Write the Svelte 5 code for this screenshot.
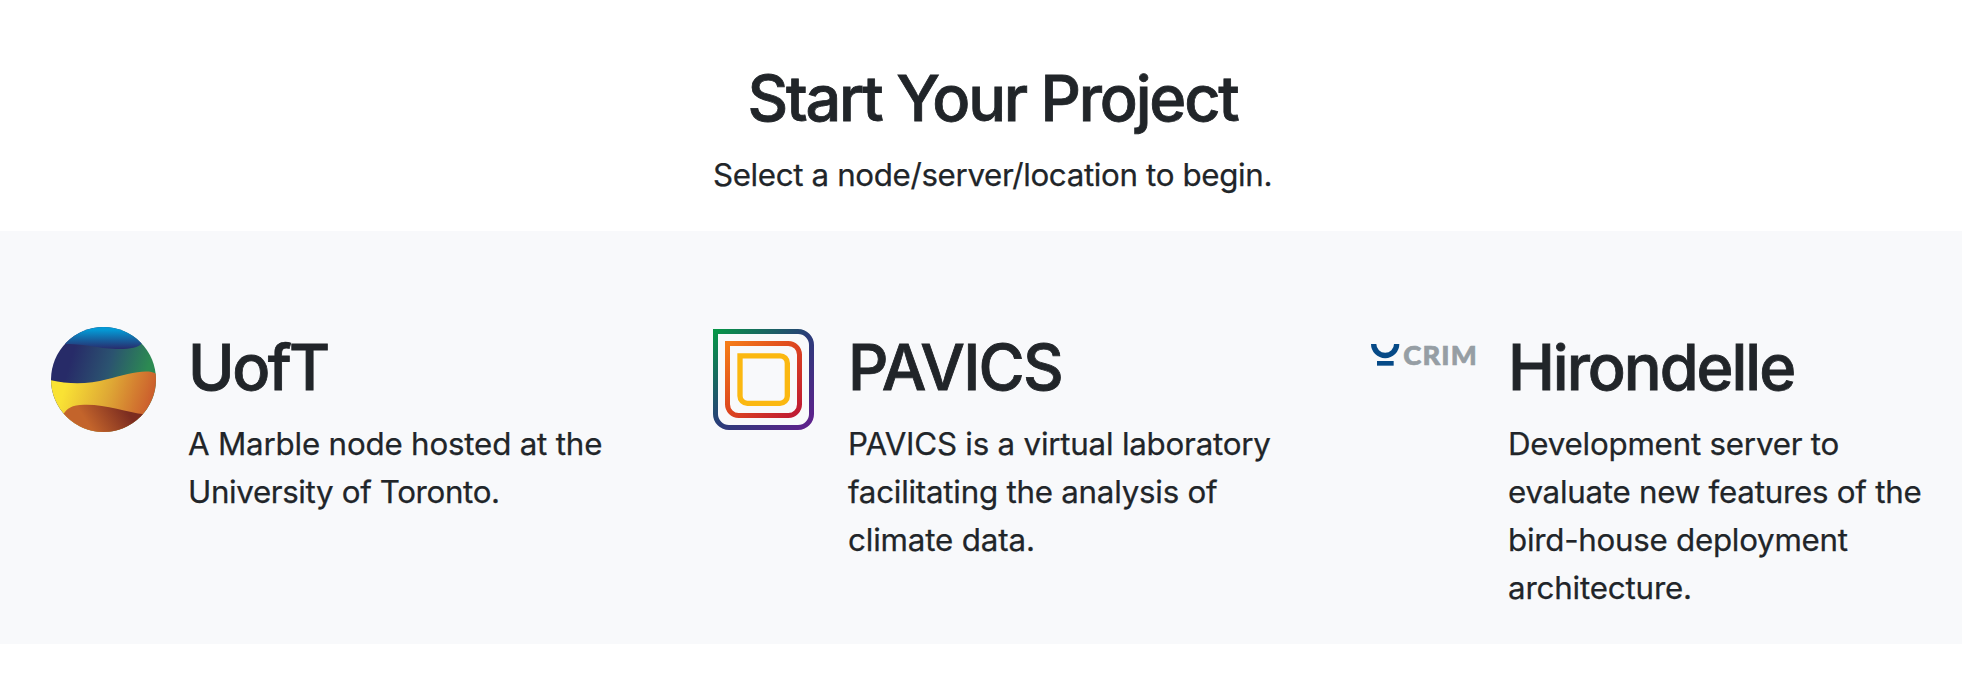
<script>
  const nodes = [
    {
      logo: 'marble',
      name: 'UofT',
      titleSpacing: -2.5,
      lines: [
        { text: 'A Marble node hosted at the', spacing: -0.19 },
        { text: 'University of Toronto.', spacing: -0.36 }
      ]
    },
    {
      logo: 'pavics',
      name: 'PAVICS',
      titleSpacing: -1.75,
      lines: [
        { text: 'PAVICS is a virtual laboratory', spacing: -0.22 },
        { text: 'facilitating the analysis of', spacing: -0.24 },
        { text: 'climate data.', spacing: -0.15 }
      ]
    },
    {
      logo: 'crim',
      name: 'Hirondelle',
      titleSpacing: -2.05,
      lines: [
        { text: 'Development server to', spacing: -0.22 },
        { text: 'evaluate new features of the', spacing: -0.25 },
        { text: 'bird-house deployment', spacing: -0.26 },
        { text: 'architecture.', spacing: -0.17 }
      ]
    }
  ];
</script>

<main>
  <header>
    <h1>Start Your Project</h1>
    <p>Select a node/server/location to begin.</p>
  </header>

  <section>
    {#each nodes as node}
      <article>
        {#if node.logo === 'marble'}
          <svg viewBox="33 36 315 315" aria-hidden="true">
            <defs>
              <clipPath id="disc"><circle cx="190.5" cy="193.5" r="157.5" /></clipPath>
              <linearGradient id="sky" gradientUnits="userSpaceOnUse" x1="190" y1="45" x2="190" y2="102">
                <stop offset="0" stop-color="#0498d4" />
                <stop offset="1" stop-color="#282b6c" />
              </linearGradient>
              <linearGradient id="sea" gradientUnits="userSpaceOnUse" x1="95" y1="125" x2="315" y2="190">
                <stop offset="0" stop-color="#272b68" />
                <stop offset="0.5" stop-color="#2b5370" />
                <stop offset="1" stop-color="#2c8a52" />
              </linearGradient>
              <linearGradient id="sand" gradientUnits="userSpaceOnUse" x1="75" y1="215" x2="320" y2="290">
                <stop offset="0" stop-color="#f9e234" />
                <stop offset="0.5" stop-color="#dfa935" />
                <stop offset="1" stop-color="#cc602d" />
              </linearGradient>
              <linearGradient id="clay" gradientUnits="userSpaceOnUse" x1="150" y1="335" x2="250" y2="270">
                <stop offset="0" stop-color="#c3642b" />
                <stop offset="1" stop-color="#7b2c20" />
              </linearGradient>
            </defs>
            <g clip-path="url(#disc)">
              <rect x="33" y="36" width="315" height="315" fill="url(#sea)" />
              <path d="M33 36H348V85H306C294 99 266 103 228 102C167 100 145 87 77 87H33Z" fill="url(#sky)" />
              <path d="M33 196C88 209 148 208 201 193C260 177 321 160 348 176V351H33Z" fill="url(#sand)" />
              <path d="M68 300C82 279 94 270 133 269C194 267 261 291 314 298V351H68Z" fill="url(#clay)" />
            </g>
          </svg>
        {:else if node.logo === 'pavics'}
          <svg viewBox="33 36 315 315" fill="none" stroke-width="15" aria-hidden="true">
            <defs>
              <linearGradient id="outer" gradientUnits="userSpaceOnUse" x1="46" y1="49" x2="335" y2="338">
                <stop offset="0" stop-color="#079447" />
                <stop offset="0.5" stop-color="#293c79" />
                <stop offset="1" stop-color="#61208d" />
              </linearGradient>
              <linearGradient id="middle" gradientUnits="userSpaceOnUse" x1="82" y1="85" x2="299" y2="302">
                <stop offset="0" stop-color="#f57c18" />
                <stop offset="0.5" stop-color="#dc4420" />
                <stop offset="1" stop-color="#bd1734" />
              </linearGradient>
            </defs>
            <path d="M46.500 49.500H294A40.500 40.500 0 0 1 334.500 90V297A40.500 40.500 0 0 1 294 337.500H87A40.500 40.500 0 0 1 46.500 297Z" stroke="url(#outer)" />
            <path d="M82.500 85.500H265A33.500 33.500 0 0 1 298.500 119V268A33.500 33.500 0 0 1 265 301.500H116A33.500 33.500 0 0 1 82.500 268Z" stroke="url(#middle)" />
            <path d="M120 122.500H240A22 22 0 0 1 262 144.500V243A22 22 0 0 1 240 265H142A22 22 0 0 1 120 243Z" stroke="#fbb811" stroke-width="16" />
          </svg>
        {:else}
          <svg viewBox="33 -9 315 315" aria-hidden="true">
            <path d="M41 42A34.500 34.500 0 0 0 110 42" fill="none" stroke="#064a87" stroke-width="16" />
            <rect x="51" y="93" width="50" height="14" fill="#064a87" />
            <text x="130" y="104" textLength="220" class="wordmark">CRIM</text>
          </svg>
        {/if}
        <div class="body">
          <h2 style="letter-spacing: {node.titleSpacing}px">{node.name}</h2>
          <p>
            {#each node.lines as line}
              <span style="letter-spacing: {line.spacing}px">{line.text}</span>
            {/each}
          </p>
        </div>
      </article>
    {/each}
  </section>
</main>

<style>
  :global(body) {
    background: #fff;
  }

  main {
    font-family: Inter, 'Liberation Sans', sans-serif;
    color: #212529;
  }

  header {
    height: 231px;
    box-sizing: border-box;
    padding: 60px 0 0 23px;
    text-align: center;
    white-space: nowrap;
  }

  h1,
  h2 {
    margin: 0 0 15px;
    font-size: 63px;
    font-weight: 500;
    line-height: 76px;
    letter-spacing: -2.2px;
    -webkit-text-stroke: 0.8px currentColor;
  }

  p {
    margin: 0;
    font-size: 31.300px;
    font-weight: 400;
    line-height: 48px;
    -webkit-text-stroke: 0.25px currentColor;
  }

  header p {
    letter-spacing: -0.35px;
  }

  section {
    display: grid;
    grid-template-columns: repeat(3, 660px);
    height: 413px;
    box-sizing: border-box;
    padding: 96px 0 0 51px;
    background: #f8f9fb;
    overflow: hidden;
  }

  article {
    display: flex;
    align-items: flex-start;
    gap: 32px;
  }

  svg {
    flex: none;
    width: 105px;
    height: 105px;
  }

  .body {
    padding-top: 2px;
    white-space: nowrap;
  }

  .body span {
    display: block;
  }

  .wordmark {
    font-family: Lato, 'Open Sans', sans-serif;
    font-size: 82px;
    font-weight: 900;
    fill: #969ea4;
    stroke: #969ea4;
    stroke-width: 2px;
  }
</style>
